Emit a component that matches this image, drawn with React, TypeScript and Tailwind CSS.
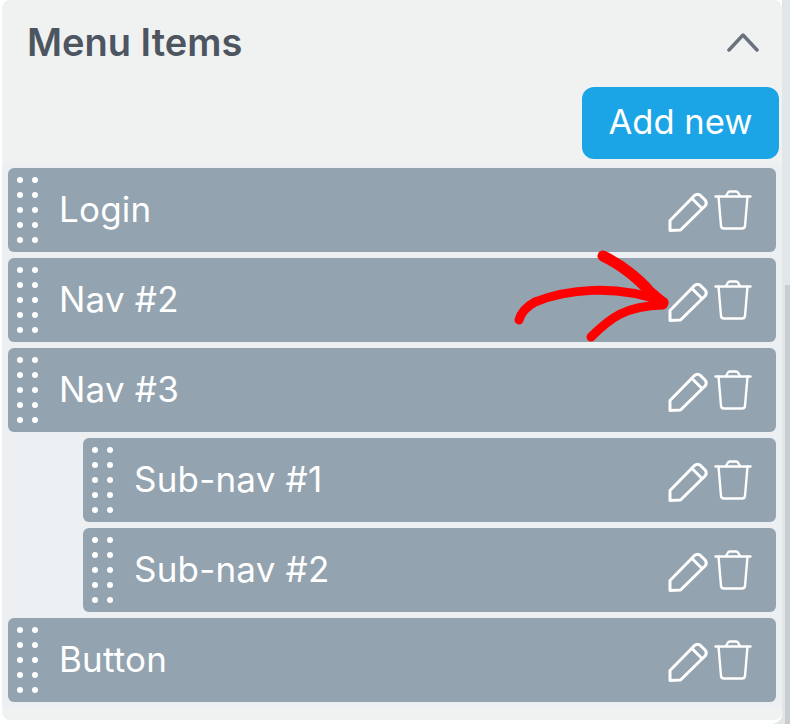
const font = { fontFamily: '"Inter", "Liberation Sans", sans-serif' };

function Dots() {
  return (
    <div className="grid grid-cols-[6px_6px] gap-x-[9px] gap-y-[9px] w-[21px] shrink-0">
      {Array.from({ length: 10 }).map((_, i) => (
        <span key={i} className="block w-[6px] h-[6px] rounded-full bg-white" />
      ))}
    </div>
  );
}

function Pencil() {
  return (
    <svg width="40" height="40" viewBox="0 0 40 40" fill="none" stroke="white" strokeWidth="3" strokeLinejoin="round" strokeLinecap="round">
      <path d="M2 28.5 L26.5 3.5 Q29.5 1 32.5 3.5 L37 8 Q39.5 11 37 14 L12.5 38 L2 38.5 Z" />
      <path d="M24 6.5 L34 16.5" />
    </svg>
  );
}

function Trash() {
  return (
    <svg width="38" height="40" viewBox="0 0 38 40" fill="none" stroke="white" strokeWidth="2.4" strokeLinejoin="round" strokeLinecap="round">
      <path d="M1.5 6.5 H36.5" />
      <path d="M4.5 6.5 L7 36 Q7.3 38.5 10 38.5 H28 Q30.7 38.5 31 36 L33.5 6.5" />
      <path d="M12 6 L14 2.5 Q14.5 1.5 16 1.5 H22 Q23.5 1.5 24 2.5 L26 6" />
    </svg>
  );
}

function Row({ label, sub }: { label: string; sub?: boolean }) {
  return (
    <div className={`h-[84px] rounded-[6px] bg-[#93a3af] flex items-center pl-[9px] pr-[24px] text-white ${sub ? "ml-[75px]" : ""}`}>
      <Dots />
      <span className="ml-[21px] text-[35px] tracking-[0.2px] leading-none flex-1 -mt-[1px]" style={font}>{label}</span>
      <span className="flex items-center gap-[6px] mt-[1px]">
        <span className="mt-[2px]"><Pencil /></span>
        <span className="-mt-[2px]"><Trash /></span>
      </span>
    </div>
  );
}

export default function App() {
  return (
    <div className="relative w-[790px] h-[724px] bg-[#e1e6e9] overflow-hidden" style={font}>
      <div className="absolute right-0 top-[285px] w-[5px] h-[439px] bg-[#c9cdd0]" />
      <div className="relative h-[724px] w-[782px] bg-white rounded-br-[10px] pb-[4px]">
        <div className="ml-[2px] h-[720px] bg-[#f0f2f2] rounded-[8px] flex flex-col">
          <div className="h-[87px] flex items-center justify-between pl-[25px] pr-[23px] pb-[4px] shrink-0">
            <span className="text-[38px] leading-none font-semibold text-[#4d5560]">Menu Items</span>
            <svg width="32" height="20" viewBox="0 0 32 20" fill="none" stroke="#69727d" strokeWidth="3.5" strokeLinecap="round" strokeLinejoin="round">
              <path d="M2 18 L16 3 L30 18" />
            </svg>
          </div>
          <div className="flex justify-end pr-[3px] shrink-0">
            <button className="w-[197px] h-[72px] rounded-[12px] bg-[#1ca5e6] text-white text-[34.5px] leading-none pb-[2px]">Add new</button>
          </div>
          <div className="mt-[3px] h-[546px] bg-[#ecf0f3] rounded-[6px] pt-[6px] pl-[6px] pr-[6px] flex flex-col gap-[6px]">
            <Row label="Login" />
            <Row label="Nav #2" />
            <Row label="Nav #3" />
            <Row label="Sub-nav #1" sub />
            <Row label="Sub-nav #2" sub />
            <Row label="Button" />
          </div>
        </div>
      </div>
      <svg className="absolute left-0 top-0 pointer-events-none" width="790" height="724" viewBox="0 0 790 724" fill="none" stroke="#fe0000" strokeLinecap="round" strokeLinejoin="round">
        <path d="M519 320 Q522 309 535 302 C565 290 615 283 664 302" strokeWidth="9" />
        <path d="M603 256 C622 265 640 280 650 292 L663 303" strokeWidth="11" />
        <path d="M591 337 C610 318 625 306 663 305" strokeWidth="9" />
      </svg>
    </div>
  );
}
